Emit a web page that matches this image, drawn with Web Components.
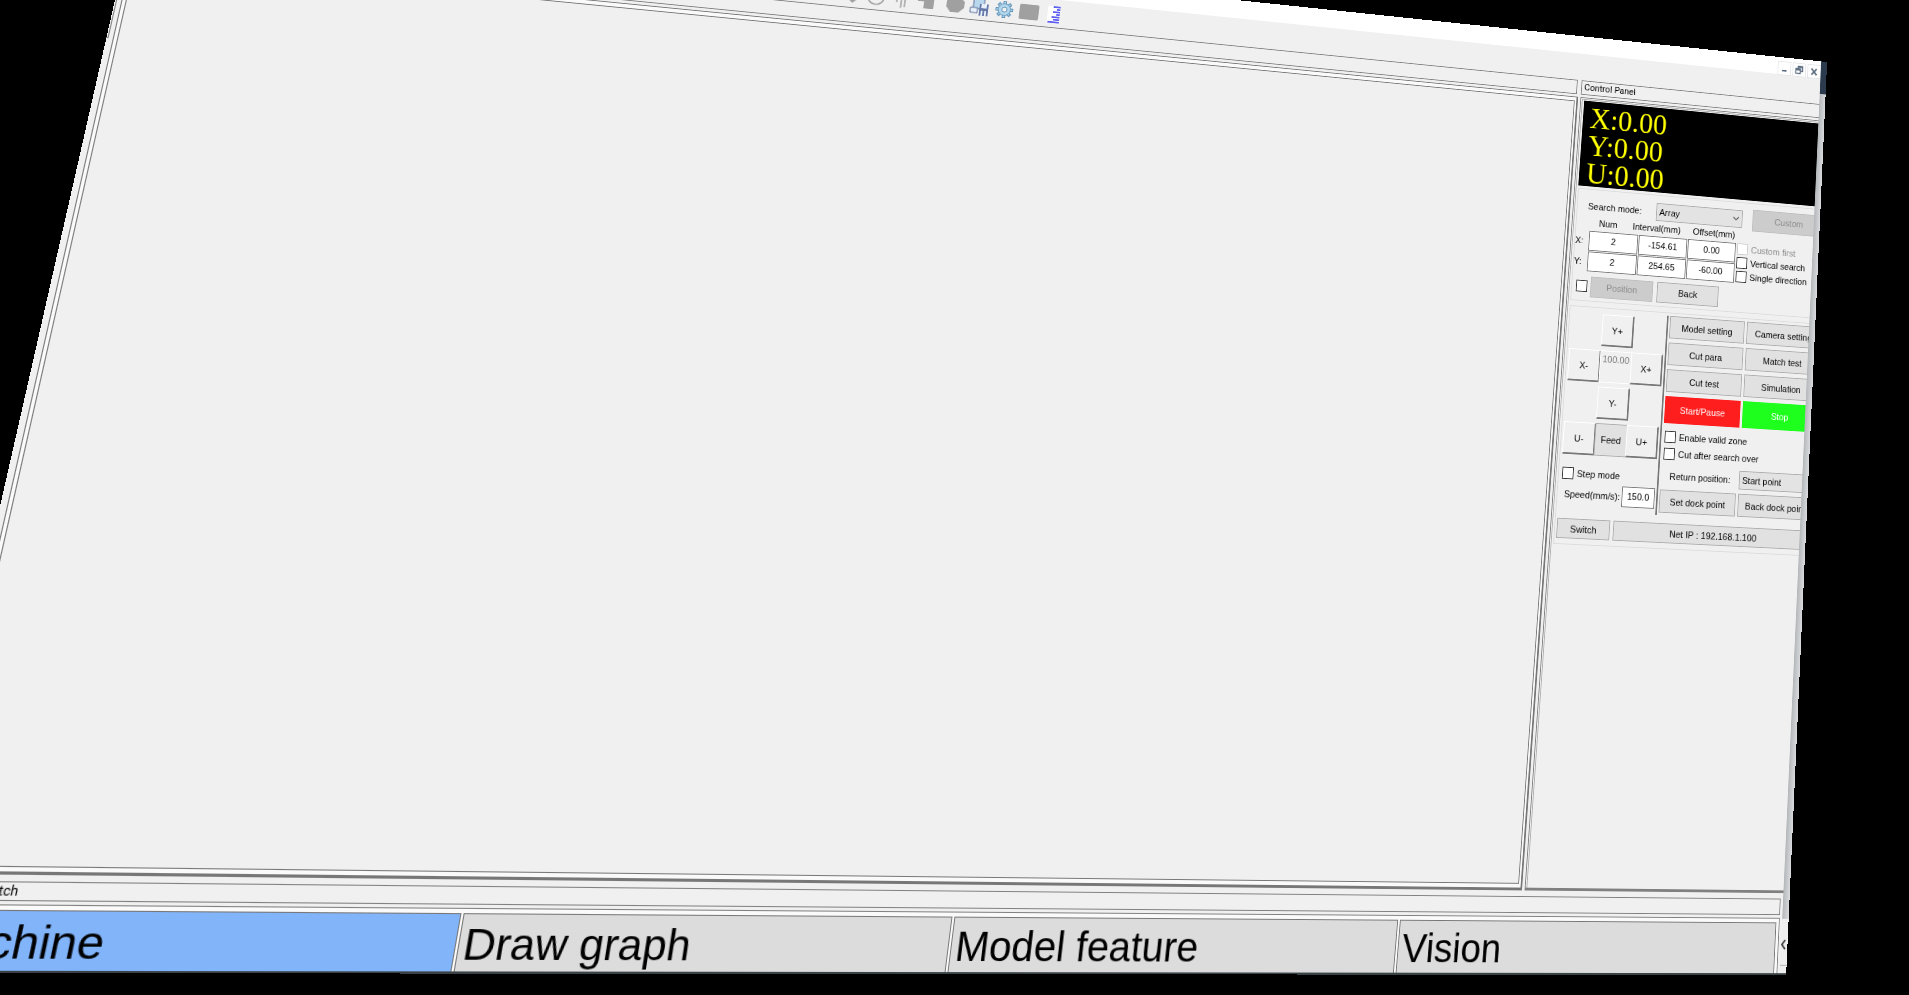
<!DOCTYPE html>
<html lang="en">
<head>
<meta charset="utf-8">
<title>Control Panel</title>
<style>
html,body{margin:0;height:100%;background:#000;overflow:hidden}
body{font-family:"Liberation Sans",Arial,sans-serif;font-size:11px;color:#000}
</style>
</head>
<body>
<tilted-screen>
  <machine-app></machine-app>
</tilted-screen>
<script>
const define = (name, html, setup) => customElements.define(name, class extends HTMLElement {
  connectedCallback() {
    if (this.shadowRoot) return;
    const t = document.createElement('template');
    t.innerHTML = html;
    this.attachShadow({mode: 'open'}).append(t.content.cloneNode(true));
    if (setup) setup(this, this.shadowRoot);
  }
});

/* Projects its content onto a quadrilateral given in fractions of the window */
define('tilted-screen', `
<style>
:host{display:block;position:absolute;left:0;top:0;width:calc(100vw + 11px);height:calc(100vh + 85px);transform-origin:0 0}
</style><slot></slot>`, host => {
  const corners = [[.0739, -.1156], [.957, .0623], [.9356, .9799], [-.0555, .9779]];
  const place = () => {
    const W = host.offsetWidth, H = host.offsetHeight;
    const [[x0, y0], [x1, y1], [x2, y2], [x3, y3]] = corners.map(([x, y]) => [x * innerWidth, y * innerHeight]);
    const dx1 = x1 - x2, dx2 = x3 - x2, sx = x0 - x1 + x2 - x3;
    const dy1 = y1 - y2, dy2 = y3 - y2, sy = y0 - y1 + y2 - y3;
    const D = dx1 * dy2 - dx2 * dy1;
    const g = (sx * dy2 - dx2 * sy) / D, h = (dx1 * sy - sx * dy1) / D;
    host.style.transform = 'matrix3d(' + [
      (x1 - x0 + g * x1) / W, (y1 - y0 + g * y1) / W, 0, g / W,
      (x3 - x0 + h * x3) / H, (y3 - y0 + h * y3) / H, 0, h / H,
      0, 0, 1, 0,
      x0, y0, 0, 1].join(',') + ')';
  };
  place();
  addEventListener('resize', place);
});

define('push-button', `
<style>
:host{display:block;height:27px}
button{display:block;box-sizing:border-box;width:100%;height:100%;margin:0;padding:0;border:1px solid #adadad;background:#e1e1e1;font:inherit;color:#000;white-space:nowrap;overflow:hidden}
:host([tone=off]) button{background:#ccc;border-color:#bfbfbf;color:#8c8c8c}
:host([tone=red]) button{background:#ff1e1e;border:0;color:#fff}
:host([tone=green]) button{background:#1eff1e;border:0;color:#fff}
:host([tone=raised]) button{background:#f0f0f0;border:solid;border-width:1px 2px 2px 1px;border-color:#fff #777 #777 #fff}
</style><button type="button"><slot></slot></button>`, (h, r) => {
  if (h.getAttribute('tone') === 'off') r.querySelector('button').disabled = true;
});

define('check-field', `
<style>
:host{display:flex;align-items:center;gap:4px;height:14px;white-space:nowrap}
input{appearance:none;margin:0;width:14px;height:14px;flex:none;box-sizing:border-box;border:1px solid #333;background:#fff}
input:disabled{border-color:#ccc}
input:disabled+label{color:#8c8c8c}
</style><input type="checkbox" id="c"><label for="c"><slot></slot></label>`, (h, r) => {
  const c = r.querySelector('input');
  c.disabled = h.hasAttribute('off');
  if (h.hasAttribute('name')) c.setAttribute('aria-label', h.getAttribute('name'));
});

define('num-box', `
<style>
:host{display:block;height:24px}
input{display:block;box-sizing:border-box;width:100%;height:100%;margin:0;padding:0 0 3px;border:1px solid #7a7a7a;background:#fff;font:inherit;color:#000;text-align:center}
</style><input type="text">`, (h, r) => {
  const i = r.querySelector('input');
  i.value = h.getAttribute('value');
  i.setAttribute('aria-label', h.getAttribute('name'));
});

define('drop-down', `
<style>
:host{display:block;position:relative;height:22px}
select{appearance:none;display:block;box-sizing:border-box;width:100%;height:100%;margin:0;padding:0 3px;border:1px solid #adadad;border-radius:0;background:#e3e3e3;font:inherit;color:#000}
svg{position:absolute;right:4px;top:8px;width:9px;height:6px}
</style><select><option></option></select>
<svg viewBox="0 0 9 6"><path d="M1 1l3.500 3.500L8 1" fill="none" stroke="#555" stroke-width="1.200"/></svg>`, (h, r) => {
  r.querySelector('option').textContent = h.getAttribute('value');
  r.querySelector('select').setAttribute('aria-label', h.getAttribute('name'));
});

define('position-readout', `
<style>
:host{display:block;box-sizing:border-box;height:105px;padding:4px 0 0 9px;background:#000;color:#ff0;font:36px/34px "Liberation Serif","Times New Roman",serif;white-space:nowrap}
div{height:34px}
</style><div>X:0.00</div><div>Y:0.00</div><div>U:0.00</div>`);

define('search-group', `
<style>
:host{display:block;box-sizing:border-box;height:136px;width:324px;border:1px solid #dcdcdc;padding:6px 0 0}
.mode{display:grid;grid-template-columns:100px 112px 96px;align-items:center;height:28px}
.mode span{padding-left:13px}
.mode push-button{margin-left:13px;width:96px}
.heads{display:grid;grid-template-columns:50px 74px 74px;padding-left:15px;height:16px;line-height:13px}
.heads span{text-align:center;white-space:nowrap}
.body{display:flex;height:50px}
.table{display:grid;grid-template-columns:16px 62px 62px 62px;column-gap:1px;row-gap:1px;align-content:start}
.table span{line-height:24px;height:24px}
.checks{display:flex;flex-direction:column;gap:3px;padding-left:2px}
.foot{display:flex;align-items:center;padding:4px 0 0 5px;height:26px}
.foot push-button{height:25px}
</style>
<div class="mode"><span>Search mode:</span><drop-down name="Search mode" value="Array"></drop-down><push-button tone="off">Custom</push-button></div>
<div class="heads"><span>Num</span><span>Interval(mm)</span><span>Offset(mm)</span></div>
<div class="body">
<div class="table">
<span>X:</span><num-box name="X num" value="2"></num-box><num-box name="X interval" value="-154.61"></num-box><num-box name="X offset" value="0.00"></num-box>
<span>Y:</span><num-box name="Y num" value="2"></num-box><num-box name="Y interval" value="254.65"></num-box><num-box name="Y offset" value="-60.00"></num-box>
</div>
<div class="checks"><check-field off>Custom first</check-field><check-field>Vertical search</check-field><check-field>Single direction</check-field></div>
</div>
<div class="foot"><check-field name="Use position"></check-field><push-button tone="off" style="width:79px">Position</push-button><push-button style="width:79px;margin-left:5px">Back</push-button></div>`);

define('jog-pad', `
<style>
:host{display:block}
.pad{display:grid;grid-template-columns:repeat(3,39px);grid-auto-rows:38px;row-gap:5px;padding:0 0 0 2px}
.pad push-button{height:38px;width:40px}
output{box-sizing:border-box;border:1px solid #fff;width:40px;text-align:center;color:#777;line-height:18px}
check-field{margin:15px 0 0 4px}
.speed{display:flex;align-items:center;padding:5px 0 0 8px}
.speed span{width:71px;white-space:nowrap}
.speed num-box{width:41px}
</style>
<div class="pad"><i></i><push-button tone="raised">Y+</push-button><i></i>
<push-button tone="raised">X-</push-button><output>100.00</output><push-button tone="raised">X+</push-button>
<i></i><push-button tone="raised">Y-</push-button><i></i>
<push-button tone="raised">U-</push-button><push-button>Feed</push-button><push-button tone="raised">U+</push-button></div>
<check-field>Step mode</check-field>
<div class="speed"><span>Speed(mm/s):</span><num-box name="Speed (mm/s)" value="150.0"></num-box></div>`);

define('job-actions', `
<style>
:host{display:grid;grid-template-columns:96px 96px;column-gap:3px;row-gap:5px;align-content:start}
.go{height:32px}
.wide{grid-column:1/3;display:flex;flex-direction:column;gap:6px;padding:4px 0 3px 2px}
.ret{padding-left:11px;line-height:22px;white-space:nowrap}
</style>
<push-button>Model setting</push-button><push-button>Camera setting</push-button>
<push-button>Cut para</push-button><push-button>Match test</push-button>
<push-button>Cut test</push-button><push-button>Simulation</push-button>
<push-button class="go" tone="red">Start/Pause</push-button><push-button class="go" tone="green">Stop</push-button>
<div class="wide"><check-field>Enable valid zone</check-field><check-field>Cut after search over</check-field></div>
<span class="ret">Return position:</span><drop-down name="Return position" value="Start point"></drop-down>
<push-button>Set dock point</push-button><push-button>Back dock point</push-button>`);

define('motion-group', `
<style>
:host{display:block;box-sizing:border-box;height:279px;width:324px;margin-top:6px;border:1px solid #dcdcdc;padding:3px 0 0}
.cols{display:flex;height:236px}
jog-pad{width:122px;padding-top:4px}
.cols job-actions{border-left:2px solid #777;padding-left:2px}
.net{display:flex;gap:4px;padding:9px 0 0 2px}
.net push-button{height:23px}
</style>
<div class="cols"><jog-pad></jog-pad><job-actions></job-actions></div>
<div class="net"><push-button style="width:65px">Switch</push-button><push-button style="width:250px">Net IP : 192.168.1.100</push-button></div>`);

define('control-panel', `
<style>
:host{display:flex;flex-direction:column;overflow:hidden}
h2{flex:none;box-sizing:border-box;height:18px;margin:0 0 3px;padding:0 3px;border:1px solid #808080;border-right:0;font:11px/16px Roboto,sans-serif}
.frame{flex:1;border:solid #808080;border-width:1px 0 3px 1px;padding:1px 0 0 1px}
.inner{height:100%;box-sizing:border-box;border:solid #b0b0b0;border-width:1px 0 0 1px;padding:1px 0 0 2px}
position-readout{margin-bottom:3px}
</style>
<h2>Control Panel</h2>
<div class="frame"><div class="inner"><position-readout></position-readout><search-group></search-group><motion-group></motion-group></div></div>`);

define('work-area', `
<style>
:host{display:flex;flex-direction:column;min-width:0}
.band{flex:none;box-sizing:border-box;height:18px;margin:0 2px 3px 0;border:1px solid #808080}
.row{flex:1;display:flex}
.rail{width:6px}
.rail i{display:block;width:1px;height:90px;border:solid #808080;border-width:0 1px 1px 0}
.frame{flex:1;border:solid #777;border-width:1px 2px 3px 1px;padding:4px 2px 4px 3px;background:#fafafa}
.canvas{height:100%;box-sizing:border-box;border:1px solid #777;background:#f0f0f0}
</style>
<div class="band"></div>
<div class="row"><div class="rail"><i></i></div><div class="frame"><div class="canvas"></div></div></div>`);

define('title-bar', `
<style>
:host{display:flex;justify-content:flex-end;align-items:flex-end;gap:2px;height:22px;background:#fff}
button{width:18px;height:18px;margin:0 0 -1px;padding:0;border:1px solid #e4e6ea;background:#fff}
svg{display:block;width:16px;height:16px;fill:none;stroke:#5b6b7f;stroke-width:2}
</style>
<button aria-label="Minimize"><svg viewBox="0 0 16 16"><path d="M5 11h6"/></svg></button>
<button aria-label="Restore"><svg viewBox="0 0 16 16" stroke-width="1"><path d="M6.500 6V3.500h6v6H10M3.500 6.500h6v6h-6zM3.500 8h6M6.500 4.500h6" stroke-width="1.500"/></svg></button>
<button aria-label="Close"><svg viewBox="0 0 16 16"><path d="M4.500 4.500l7 8M11.500 4.500l-7 8"/></svg></button>`);

define('tool-bar', `
<style>
:host{display:flex;align-items:center;box-sizing:border-box;height:33px;padding:3px 0 0 722px}
svg{width:28px;height:28px;flex:none}
</style>
<svg viewBox="0 0 28 28"><path d="M8 10l12 4v4l-6 6-6-5z" fill="#a0a0a0"/></svg>
<svg viewBox="0 0 28 28"><circle cx="11" cy="14" r="9" fill="none" stroke="#a0a0a0" stroke-width="1.500"/></svg>
<svg viewBox="0 0 28 28"><path d="M6 6v12M11 4v20M2 9l4 2M11 8l5-2M15 5v18" fill="none" stroke="#a0a0a0" stroke-width="1.500"/></svg>
<svg viewBox="0 0 28 28"><path d="M1 4h11v4h7v14H8v-8H1z" fill="#a0a0a0"/></svg>
<svg viewBox="0 0 28 28"><path d="M10 4h9l6 6v7l-6 6h-9l-5-6v-7z" fill="#a0a0a0"/></svg>
<svg viewBox="0 0 28 28"><path d="M7 3h12v13H7z" fill="#b9d8ee" stroke="#5c6f9a"/><path d="M4 15h8v6H4z" fill="#e8f1fa" stroke="#5c6f9a"/><path d="M14 10h10v14H14z" fill="#6578a8"/><path d="M16 10h6v5h-6zM16 18h2v6h-2zM20 18h2v6h-2z" fill="#e8f1fa"/></svg>
<svg viewBox="0 0 28 28"><g stroke="#5f93b8"><path d="M14 4v20M4 14h20M7 7l14 14M21 7L7 21" stroke-width="4"/><path d="M14 5v18M5 14h18M8 8l12 12M20 8L8 20" stroke="#b4d8ee" stroke-width="2"/><circle cx="14" cy="14" r="7" fill="#b4d8ee"/><circle cx="14" cy="14" r="3" fill="#f0f0f0"/></g></svg>
<svg viewBox="0 0 28 28"><rect x="3" y="5" width="22" height="18" rx="2" fill="#a0a0a0"/></svg>
<svg viewBox="0 0 28 28"><path d="M7 4h14v20H7z" fill="#fff"/><path d="M13 5h8M17 8h4M13 11h8M17 14h4M12 17h9M14 20h7M8 23h13" stroke="#2828f0" stroke-width="1.500"/></svg>`);

define('mode-tabs', `
<style>
:host{display:block;box-sizing:border-box;height:60px;border:1px solid #808080;border-bottom:0;padding:4px 3px 0 6px;background:#fafafa}
nav{display:grid;grid-template-columns:repeat(3,481px) 1fr;gap:2px;height:55px}
button{margin:0;padding:3px 0 0 4px;border:1px solid #777;border-bottom:0;background:#dcdcdc;font:42px "Liberation Sans",Arial,sans-serif;color:#000;text-align:left;white-space:nowrap}
button[aria-current]{background:#82b4fa}
</style>
<nav><button aria-current="page">Machine</button><button>Draw graph</button><button>Model feature</button><button>Vision</button></nav>`);

define('edge-strip', `
<style>
:host{display:flex;flex-direction:column;background:linear-gradient(90deg,#b4b7ba,#d8dadd)}
.sky{height:42px;background:#2b3a4c}
.fill{flex:1}
.tab{height:50px;background:#eee;border-bottom:1px solid #b0b0b0}
svg{display:block;width:8px;height:50px}
.end{height:8px;background:#eee}
</style>
<div class="sky"></div><div class="fill"></div>
<div class="tab"><svg viewBox="0 0 8 50"><path d="M5 23l-4 5 4 5" fill="none" stroke="#333" stroke-width="2"/></svg></div><div class="end"></div>`);

define('machine-app', `
<style>
:host{display:flex;flex-direction:column;height:100%;background:#f0f0f0}
.screen{flex:1;display:grid;grid-template-columns:1fr 8px;min-height:0}
.app{display:flex;flex-direction:column;min-width:0}
.docks{flex:1;display:grid;grid-template-columns:1fr 312px;column-gap:3px;min-height:0}
.status{flex:none;box-sizing:border-box;height:18px;margin:6px 3px 3px;padding-left:52px;border:1px solid #808080;font:12px/16px Roboto,sans-serif}
mode-tabs{flex:none;margin:0 3px}
.edge{height:2px;background:#3a4246}
</style>
<div class="screen">
<div class="app"><title-bar></title-bar><tool-bar></tool-bar>
<div class="docks"><work-area></work-area><control-panel></control-panel></div>
<div class="status">Match</div>
<mode-tabs></mode-tabs></div>
<edge-strip></edge-strip>
</div>
<div class="edge"></div>`);
</script>
</body>
</html>
